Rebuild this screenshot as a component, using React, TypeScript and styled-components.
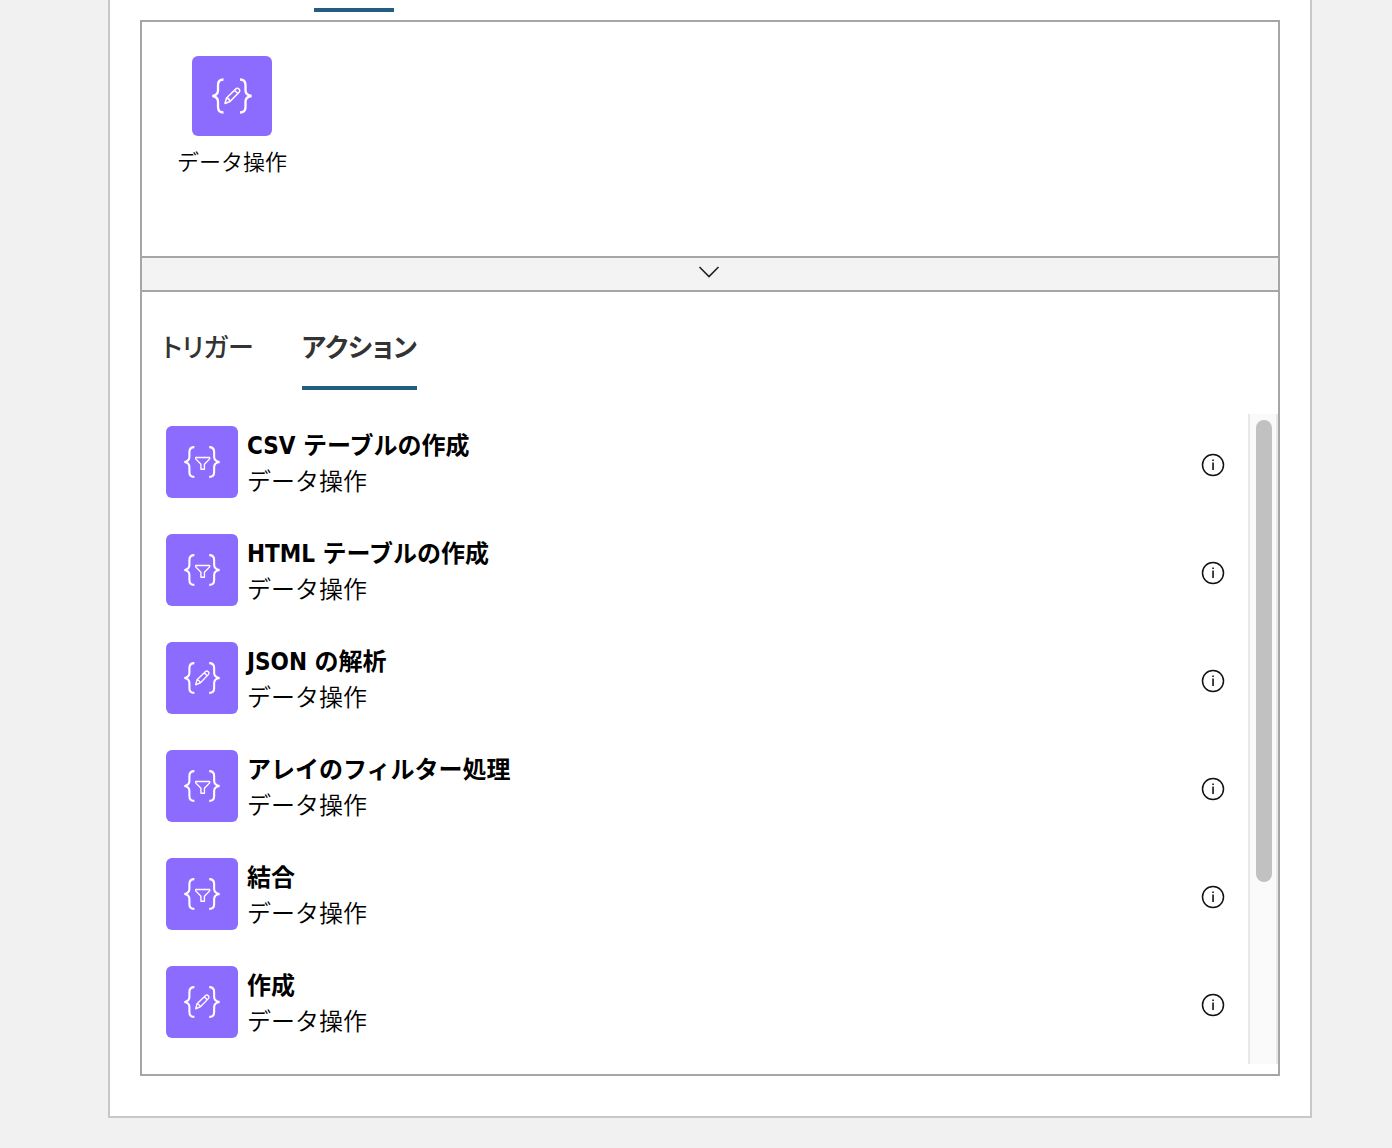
import React, { useState } from "react";
import styled, { createGlobalStyle } from "styled-components";

const GlobalStyle = createGlobalStyle`
  *, *::before, *::after { box-sizing: border-box; }
  body {
    margin: 0;
    background: #f1f1f1;
    color: #000;
    font-family: "DejaVu Sans Condensed", "Noto Sans CJK JP", sans-serif;
  }
  button {
    margin: 0;
    padding: 0;
    border: 0;
    background: none;
    color: inherit;
    font: inherit;
    cursor: pointer;
  }
`;

const Page = styled.div`
  padding: 0 80px 30px 108px;
`;

const Panel = styled.main`
  padding: 8px 30px 40px;
  border: 2px solid #c8c8c8;
  border-top: 0;
  background: #fff;
`;

const CategoryMarker = styled.div`
  width: 80px;
  height: 4px;
  margin: 0 0 8px 174px;
  background: #235d83;
`;

const Box = styled.section`
  border: 2px solid #a6a6a6;
`;

const Connectors = styled.div`
  display: flex;
  height: 234px;
  padding: 34px 30px;
`;

const Connector = styled.button`
  display: flex;
  flex-direction: column;
  align-items: center;
  align-self: flex-start;
  gap: 7px;
  width: 120px;
  font-family: "Noto Sans CJK JP", sans-serif;
  font-size: 22px;
  font-weight: 350;
  line-height: 34px;
  white-space: nowrap;
`;

const Tile = styled.span<{ $size: number }>`
  display: flex;
  flex: none;
  width: ${(p) => p.$size}px;
  height: ${(p) => p.$size}px;
  border-radius: 6px;
  background: #8c6cff;

  svg {
    width: 100%;
    height: 100%;
  }
`;

const ExpandBar = styled.button`
  display: flex;
  justify-content: center;
  align-items: center;
  width: 100%;
  height: 36px;
  padding: 0 2px 4px 0;
  border-top: 2px solid #a6a6a6;
  border-bottom: 2px solid #a6a6a6;
  background: #f3f3f3;
`;

const Tabs = styled.div`
  display: flex;
  gap: 48px;
  padding: 34px 20px 24px;
`;

const Tab = styled.button<{ $active: boolean }>`
  height: 64px;
  padding-bottom: 20px;
  border-bottom: 4px solid ${(p) => (p.$active ? "#235d83" : "transparent")};
  color: #333;
  font-family: "Noto Sans CJK JP", sans-serif;
  font-size: 26px;
  font-weight: ${(p) => (p.$active ? 700 : 500)};
  font-feature-settings: "palt";
  line-height: 40px;
`;

const ListArea = styled.div`
  display: flex;
  margin-bottom: 10px;
`;

const List = styled.ul`
  display: flex;
  flex: 1;
  flex-direction: column;
  gap: 34px;
  margin: 0;
  padding: 12px 23px 24px 24px;
  list-style: none;
`;

const Row = styled.li`
  display: flex;
  align-items: flex-start;
  gap: 9px;
`;

const RowText = styled.div`
  flex: 1;
  padding-top: 2px;
  font-size: 24px;
  line-height: 36px;
`;

const Title = styled.div`
  font-weight: 700;
`;

const Subtitle = styled.div`
  font-weight: 350;
`;

const InfoButton = styled.button`
  display: flex;
  align-self: center;
  padding-top: 4px;
`;

const Track = styled.div`
  width: 30px;
  padding: 6px;
  border: solid #e8e8e8;
  border-width: 0 2px;
  background: #fafafa;
`;

const Thumb = styled.div`
  width: 16px;
  height: 462px;
  border-radius: 8px;
  background: #c1c1c1;
`;

type Kind = "filter" | "pencil";

function DataIcon({ kind }: { kind: Kind }) {
  return (
    <svg viewBox="0 0 80 80" fill="none" stroke="#fff" aria-hidden="true">
      <path
        strokeWidth="2.300"
        d="M31.500 23.500Q26 23.500 26 29v5.500Q26 39 20.500 40Q26 41 26 45.500V51Q26 56.500 31.500 56.500M48 23.500Q53.500 23.500 53.500 29v5.500Q53.500 39 59.500 40Q53.500 41 53.500 45.500V51Q53.500 56.500 48 56.500"
      />
      {kind === "pencil" ? (
        <path
          strokeWidth="1.500"
          strokeLinejoin="round"
          d="M33 47.500l1.500-5.500L44 32.700q1.500-1.200 3 .300q1.500 1.500.300 3L38 45.500zM34.500 42q3 .500 3.500 3.500M42.500 34.200l3.300 3.300"
        />
      ) : (
        <path
          strokeWidth="1.500"
          strokeLinejoin="round"
          d="M33 35h15.500v1.500l-5.800 6v5.500h-3.900v-5.500l-5.800-6z"
        />
      )}
    </svg>
  );
}

function InfoIcon() {
  return (
    <svg width="24" height="24" viewBox="0 0 24 24" aria-hidden="true">
      <circle cx="12" cy="12" r="10.500" fill="none" stroke="#111" strokeWidth="1.500" />
      <path d="M11.200 6.500h1.700v1.500h-1.700zM11.200 9.500h1.700v7.500h-1.700z" fill="#222" />
    </svg>
  );
}

const actions: { title: string; kind: Kind }[] = [
  { title: "CSV テーブルの作成", kind: "filter" },
  { title: "HTML テーブルの作成", kind: "filter" },
  { title: "JSON の解析", kind: "pencil" },
  { title: "アレイのフィルター処理", kind: "filter" },
  { title: "結合", kind: "filter" },
  { title: "作成", kind: "pencil" },
];

const tabs = ["トリガー", "アクション"];

export default function App() {
  const [active, setActive] = useState("アクション");

  return (
    <>
      <GlobalStyle />
      <Page>
        <Panel>
          <CategoryMarker />
          <Box>
            <Connectors>
              <Connector type="button">
                <Tile $size={80}>
                  <DataIcon kind="pencil" />
                </Tile>
                データ操作
              </Connector>
            </Connectors>
            <ExpandBar type="button" aria-label="展開">
              <svg width="22" height="14" viewBox="0 0 22 14" aria-hidden="true">
                <path d="M1.500 2l9.500 9.500L20.500 2" fill="none" stroke="#222" strokeWidth="1.600" />
              </svg>
            </ExpandBar>
            <Tabs role="tablist">
              {tabs.map((name) => (
                <Tab
                  key={name}
                  type="button"
                  role="tab"
                  aria-selected={name === active}
                  $active={name === active}
                  onClick={() => setActive(name)}
                >
                  {name}
                </Tab>
              ))}
            </Tabs>
            <ListArea>
              <List>
                {actions.map((action) => (
                  <Row key={action.title}>
                    <Tile $size={72}>
                      <DataIcon kind={action.kind} />
                    </Tile>
                    <RowText>
                      <Title>{action.title}</Title>
                      <Subtitle>データ操作</Subtitle>
                    </RowText>
                    <InfoButton type="button" aria-label="詳細">
                      <InfoIcon />
                    </InfoButton>
                  </Row>
                ))}
              </List>
              <Track>
                <Thumb />
              </Track>
            </ListArea>
          </Box>
        </Panel>
      </Page>
    </>
  );
}
